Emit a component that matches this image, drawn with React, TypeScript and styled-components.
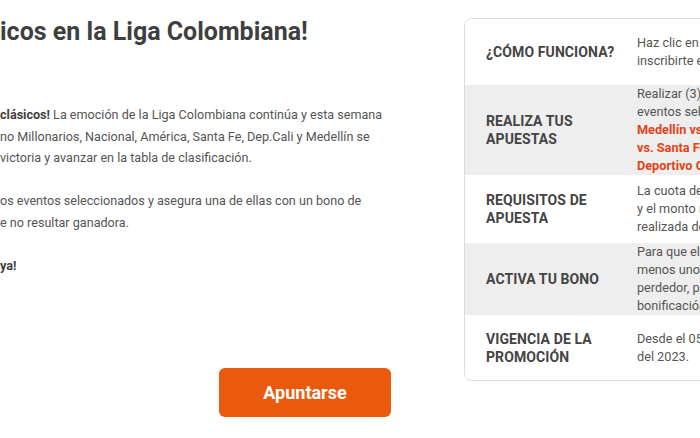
import React from 'react'
import styled, { createGlobalStyle } from 'styled-components'

const GlobalStyle = createGlobalStyle`
  html, body {
    margin: 0;
    padding: 0;
    background: #fff;
    overflow: hidden;
  }
  body {
    font-family: Roboto, 'Liberation Sans', Arial, sans-serif;
    color: #444;
  }
`

const Page = styled.div`
  display: flex;
  align-items: flex-start;
  gap: 24px;
  width: 1000px;
`

const Intro = styled.div`
  width: 440px;
  flex-shrink: 0;
  padding-top: 17px;
`

const Title = styled.h1`
  margin: 0 0 57px;
  font-size: 25px;
  line-height: 30px;
  font-weight: 700;
  color: #3f3f3f;
  white-space: nowrap;
`

const Paragraph = styled.p`
  margin: 0 0 21.6px;
  font-size: 12.6px;
  line-height: 21.6px;
  color: #555;
  white-space: nowrap;

  b {
    color: #3f3f3f;
    font-weight: 700;
  }
`

const ButtonRow = styled.div`
  display: flex;
  padding-left: 219px;
  margin-top: 91px;
`

const JoinButton = styled.button`
  width: 172px;
  height: 49px;
  border: none;
  border-radius: 6px;
  background: #ea5a0c;
  color: #fff;
  font-family: Roboto, 'Liberation Sans', Arial, sans-serif;
  font-size: 18px;
  font-weight: 700;
  cursor: pointer;
`

const Card = styled.div`
  margin-top: 18px;
  width: 340px;
  flex-shrink: 0;
  border: 1px solid #dcdcdc;
  border-radius: 8px;
  overflow: hidden;
`

const Row = styled.div<{ $shaded?: boolean; $minH: number }>`
  display: grid;
  grid-template-columns: 172px 1fr;
  align-items: center;
  min-height: ${({ $minH }) => $minH}px;
  background: ${({ $shaded }) => ($shaded ? '#eeeeee' : '#fff')};
`

const Label = styled.div`
  padding-left: 21px;
  font-size: 14px;
  line-height: 18px;
  font-weight: 700;
  color: #444;
  letter-spacing: 0.1px;
`

const Detail = styled.div`
  font-size: 12.7px;
  line-height: 18px;
  color: #555;
  white-space: nowrap;
`

const Highlight = styled.span`
  color: #e3421a;
  font-weight: 700;
`

const rows = [
  {
    label: ['¿CÓMO FUNCIONA?'],
    minH: 66,
    lines: ['Haz clic en Apuntarse para', 'inscribirte en la promoción.'],
  },
  {
    label: ['REALIZA TUS', 'APUESTAS'],
    minH: 90,
    shaded: true,
    lines: ['Realizar (3) apuestas simples en los', 'eventos seleccionados:'],
    red: ['Medellín vs. Nacional, Millonarios', 'vs. Santa Fe, América vs.', 'Deportivo Cali.'],
  },
  {
    label: ['REQUISITOS DE', 'APUESTA'],
    minH: 68,
    lines: ['La cuota debe ser mínimo de 1.50', 'y el monto mínimo de la apuesta', 'realizada de $10.000.'],
  },
  {
    label: ['ACTIVA TU BONO'],
    minH: 71,
    shaded: true,
    lines: ['Para que el bono se active, al', 'menos uno de los eventos debe ser', 'perdedor, para así recibir la', 'bonificación.'],
  },
  {
    label: ['VIGENCIA DE LA', 'PROMOCIÓN'],
    minH: 65,
    lines: ['Desde el 05 hasta el 07 de mayo', 'del 2023.'],
  },
]

export default function App() {
  return (
    <>
      <GlobalStyle />
      <Page>
        <Intro>
          <Title>icos en la Liga Colombiana!</Title>
          <Paragraph>
            <b>clásicos!</b> La emoción de la Liga Colombiana continúa y esta semana
            <br />
            no Millonarios, Nacional, América, Santa Fe, Dep.Cali y Medellín se
            <br />
            victoria y avanzar en la tabla de clasificación.
          </Paragraph>
          <Paragraph>
            os eventos seleccionados y asegura una de ellas con un bono de
            <br />
            e no resultar ganadora.
          </Paragraph>
          <Paragraph>
            <b>ya!</b>
          </Paragraph>
          <ButtonRow>
            <JoinButton>Apuntarse</JoinButton>
          </ButtonRow>
        </Intro>
        <Card>
          {rows.map((row) => (
            <Row key={row.label.join(' ')} $shaded={row.shaded} $minH={row.minH}>
              <Label>
                {row.label.map((l) => (
                  <div key={l}>{l}</div>
                ))}
              </Label>
              <Detail>
                {row.lines.map((l) => (
                  <div key={l}>{l}</div>
                ))}
                {row.red &&
                  row.red.map((l) => (
                    <div key={l}>
                      <Highlight>{l}</Highlight>
                    </div>
                  ))}
              </Detail>
            </Row>
          ))}
        </Card>
      </Page>
    </>
  )
}
